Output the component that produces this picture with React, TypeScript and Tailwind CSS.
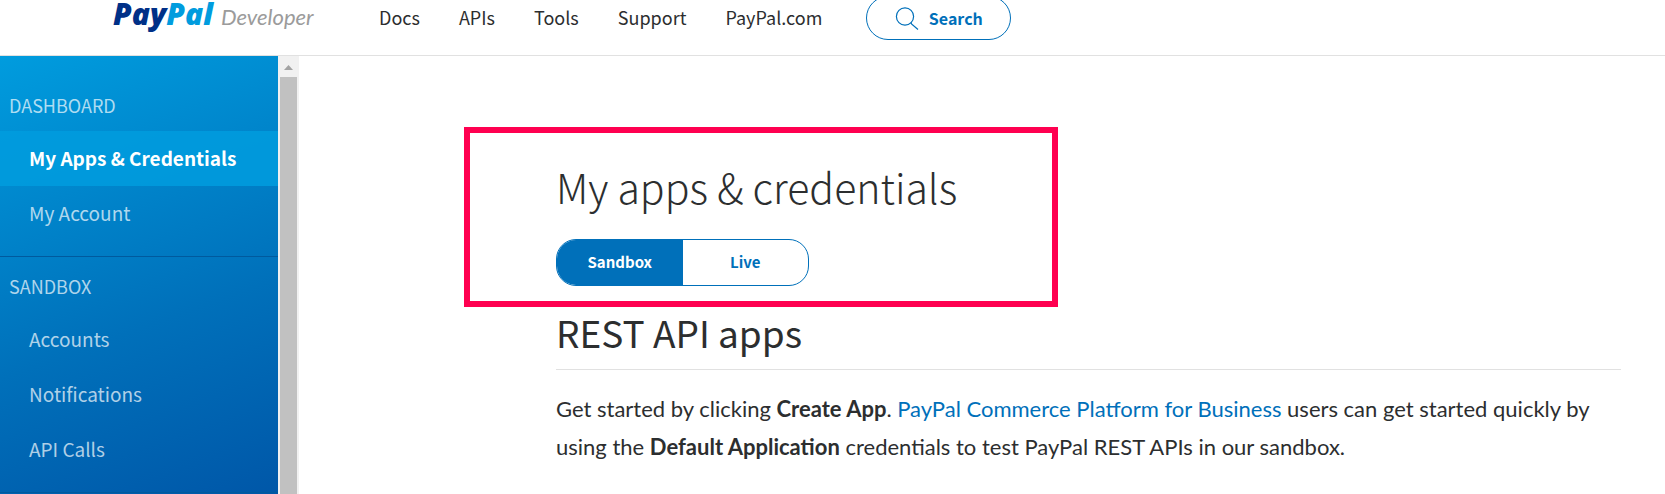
import type { ReactNode } from 'react';

const navLinks = ['Docs', 'APIs', 'Tools', 'Support', 'PayPal.com'];

function SideLink({ children, active = false }: { children: ReactNode; active?: boolean }) {
  return (
    <a
      href="#"
      className={
        active
          ? "flex h-[55px] items-center bg-[#009cde]/85 pl-[29px] text-[19px] font-bold text-white"
          : "flex h-[55px] items-center pl-[29px] text-[19px] text-white/70"
      }
    >
      {children}
    </a>
  );
}

function SideSection({ title, children }: { title: string; children: ReactNode }) {
  return (
    <section className="border-b border-[#005a9e] pb-[15px]">
      <h2 className="flex h-[55px] items-center pt-1 pl-[9px] text-[18px] text-white/70">{title}</h2>
      {children}
    </section>
  );
}

export default function App() {
  return (
    <div className="flex h-screen flex-col overflow-hidden bg-white font-['Noto_Sans_CJK_SC','Lato',sans-serif] text-[#2c2e2f]">
      <header className="shrink-0 overflow-hidden border-b border-[#e1e1e1]">
        <div className="-mt-5 flex h-[75px] items-center pl-[113px]">
          <a href="#" className="flex w-[202px] items-baseline gap-2 pb-2 leading-none italic">
            <span className="font-['Noto_Sans',sans-serif] text-[30px] leading-none font-black text-[#003087]">
              Pay<span className="text-[#009cde]">Pal</span>
            </span>
            <span className="font-['Lato',sans-serif] text-[22px] leading-none text-[#9b9b9b]">Developer</span>
          </a>
          <nav className="ml-16 flex items-center gap-[39px] text-[18px]">
            {navLinks.map((label) => (
              <a key={label} href="#">{label}</a>
            ))}
          </nav>
          <button className="ml-11 flex h-[44px] w-[145px] items-center justify-center gap-[10px] rounded-full border border-[#0070ba] text-[16px] font-bold text-[#0070ba]">
            <svg viewBox="0 0 24 24" className="size-6" fill="none" stroke="currentColor" strokeWidth="1.2">
              <circle cx="10" cy="10.5" r="8.6" />
              <path d="M16 16.5 L16.5 18 L23 23.5" />
            </svg>
            Search
          </button>
        </div>
      </header>
      <div className="flex min-h-0 grow">
        <aside className="w-[278px] shrink-0 overflow-hidden bg-[linear-gradient(160deg,#009cde_0%,#0070ba_60%,#0057a8_100%)] pt-5">
          <SideSection title="DASHBOARD">
            <SideLink active>My Apps &amp; Credentials</SideLink>
            <SideLink>My Account</SideLink>
          </SideSection>
          <SideSection title="SANDBOX">
            <SideLink>Accounts</SideLink>
            <SideLink>Notifications</SideLink>
            <SideLink>API Calls</SideLink>
          </SideSection>
        </aside>
        <div className="flex w-[21px] shrink-0 flex-col bg-[#f1f1f1]">
          <svg viewBox="0 0 21 21" className="size-[21px] shrink-0">
            <path d="M6 14 L10.5 9 L15 14 Z" fill="#a3a3a3" />
          </svg>
          <div className="mx-[2px] grow bg-[#c1c1c1]" />
        </div>
        <main className="min-w-0 grow pt-[71px] pr-11 pl-[165px]">
          <section className="w-[594px] border-[6px] border-[#ff0050] pt-[25px] pb-[15px] pl-[86px]">
            <h1 className="text-[41px] leading-[56px] font-light">My apps &amp; credentials</h1>
            <div className="mt-[25px] flex h-[47px] w-[253px] overflow-hidden rounded-[20px] border border-[#0070ba] text-[15px] font-bold">
              <button className="w-1/2 bg-[#0070ba] text-white">Sandbox</button>
              <button className="w-1/2 text-[#0070ba]">Live</button>
            </div>
          </section>
          <div className="pl-[92px]">
            <h2 className="border-b border-[#e1e1e1] pb-3 text-[37px] leading-[50px]">REST API apps</h2>
            <p className="pt-5 font-['Lato',sans-serif] text-[22px] leading-[38px]">
              Get started by clicking <b>Create App</b>.{' '}
              <a href="#" className="text-[#0070ba]">PayPal Commerce Platform for Business</a> users can get started
              quickly by using the <b>Default Application</b> credentials to test PayPal REST APIs in our sandbox.
            </p>
          </div>
        </main>
      </div>
    </div>
  );
}
